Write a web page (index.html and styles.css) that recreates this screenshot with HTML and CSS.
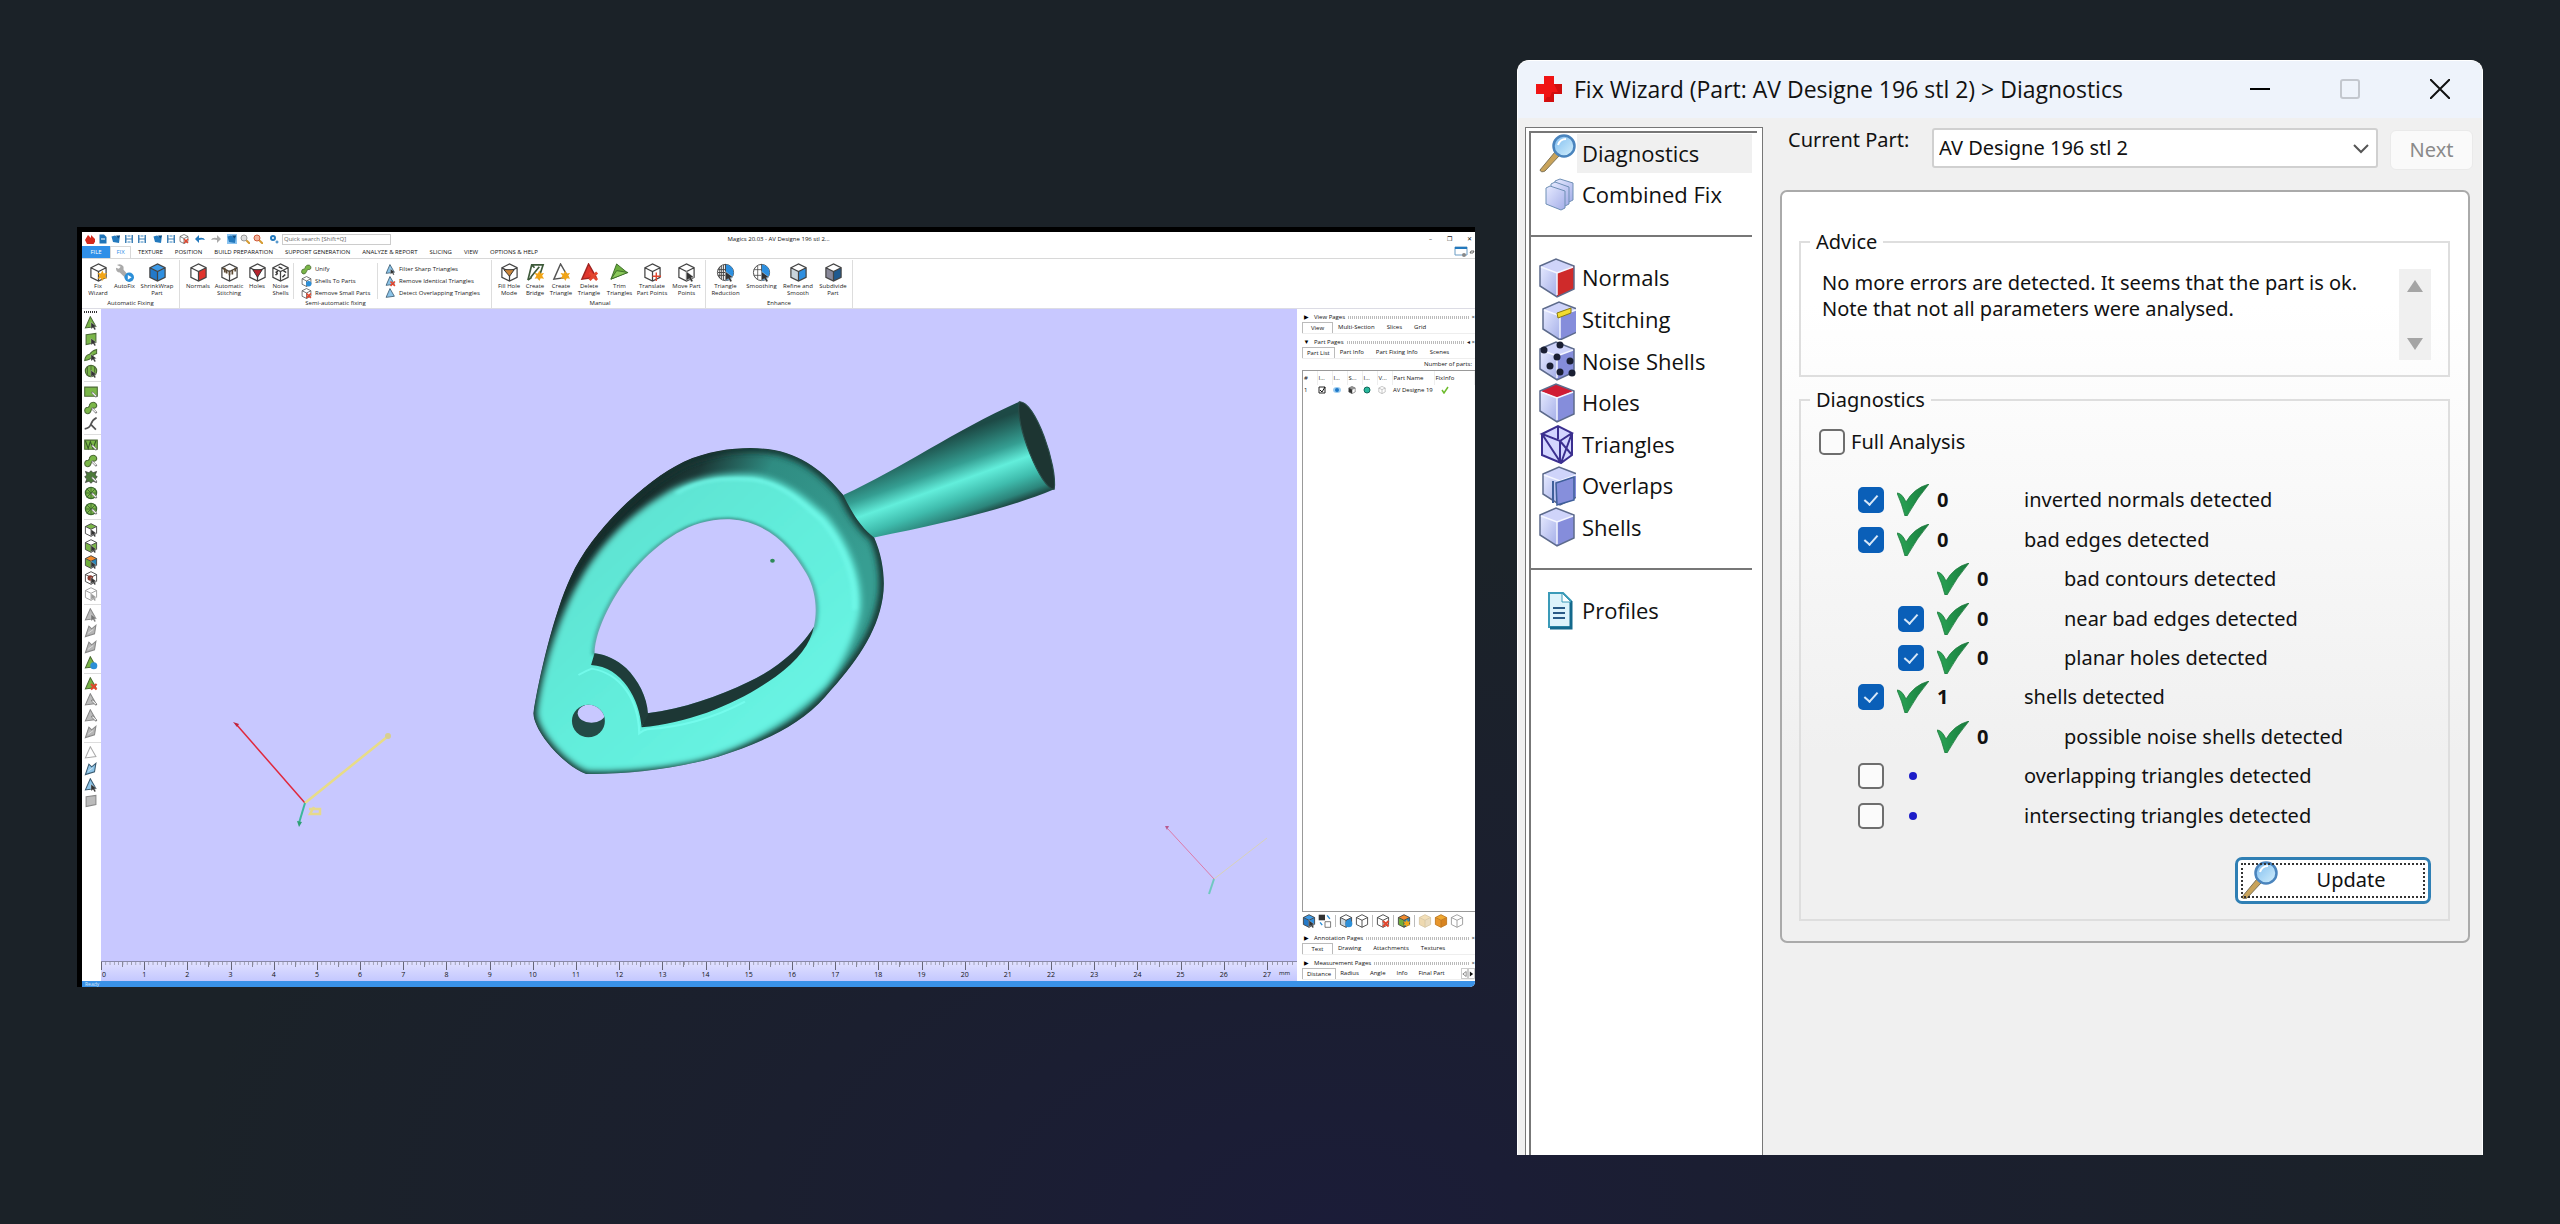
FILE: index.html
```html
<!DOCTYPE html>
<html lang="en">
<head>
<meta charset="utf-8">
<title>Magics - Fix Wizard</title>
<link rel="stylesheet" href="styles.css">
</head>
<body>
<svg class="defs" aria-hidden="true">
  <defs>
    <linearGradient id="lens" x1="0" y1="0" x2="1" y2="1"><stop offset="0" stop-color="#7dbcf0"/><stop offset="1" stop-color="#d5f0fc"/></linearGradient>
    <linearGradient id="lav" x1="0" y1="0" x2="1" y2="1"><stop offset="0" stop-color="#e6eaff"/><stop offset="1" stop-color="#a4aee8"/></linearGradient>
    <linearGradient id="mark" x1="0" y1="0" x2="1" y2="0"><stop offset="0" stop-color="#2ba656"/><stop offset="1" stop-color="#177a3c"/></linearGradient>
  </defs>
  <symbol id="glass" viewBox="0 0 38 38"><path d="M2 36 17 18l4 4L7 37q-4 2-5-1z" fill="#c9a35a" stroke="#7d7256"/><circle cx="26" cy="12" r="10.500" fill="url(#lens)" stroke="#4a84bd" stroke-width="2.500"/><path d="M20 11q2-6 8-6" fill="none" stroke="#fff" stroke-width="2"/></symbol>
  <symbol id="box" viewBox="0 0 38 40"><path d="M2 8 18 1l18 7-17 7z" fill="var(--t,#cfd4fa)"/><path d="M2 8 19 15v24L2 28z" fill="url(#lav)"/><path d="M19 15 36 8v23L19 39z" fill="var(--r,#858ddb)"/><path d="M2 8 18 1l18 7v23L19 39 2 28z" fill="none" stroke="#5d6b8c" stroke-width="1.500"/><path d="M3 9 19 15 35 9M19 15v22" fill="none" stroke="#f4f6ff" stroke-width="1.500"/></symbol>
  <symbol id="tick" viewBox="0 0 32 32"><path d="M0 9q5 0 9 9Q17 4 32 0 20 14 10 32H8Q5 20 0 9z" fill="url(#mark)" stroke="#1d7a3c" stroke-width=".8"/></symbol>
  <symbol id="cube" viewBox="0 0 20 20"><path d="M2 5 10 1l8 4-8 4z" fill="var(--t,#fff)"/><path d="M2 5l8 4v10l-8-4z" fill="var(--l,#fff)"/><path d="M18 5l-8 4v10l8-4z" fill="var(--r,#fff)"/><path d="M2 5 10 1l8 4v10l-8 4-8-4zM2 5l8 4 8-4M10 9v10" fill="none" stroke="var(--s,#444)" stroke-width="1.300"/></symbol>
  <symbol id="cursor" viewBox="0 0 20 20"><path d="M10 9l8 6-3 .500 2 3.500-2 1-2-3.500-3 2z" fill="var(--k,#333)" stroke="#fff" stroke-width=".4"/></symbol>
  <symbol id="tri" viewBox="0 0 20 20"><path d="M2 17 9 1l8 14z" fill="var(--t,#7ab648)" stroke="var(--s,#4c6b35)" stroke-width="1.500"/></symbol>
  <symbol id="quad" viewBox="0 0 20 20"><path d="M3 4 17 2v13L3 18z" fill="var(--t,#7ab648)" stroke="var(--s,#4c6b35)" stroke-width="1.500"/></symbol>
  <symbol id="slant" viewBox="0 0 20 20"><path d="M2 18 7 3l4 4 6-5-2 12z" fill="var(--t,#b5b5b5)" stroke="var(--s,#888)" stroke-width="1.500"/><path d="M6 13l7-5" stroke="#eee"/></symbol>
  <symbol id="curve" viewBox="0 0 20 20"><path d="M1 18q1-8 7-9 3-5 10-7v6q-5 1-7 5-2 4-10 5z" fill="#7ab648" stroke="#4c6b35" stroke-width="1.500"/></symbol>
  <symbol id="line" viewBox="0 0 20 20"><path d="M1 17q7-1 9-7T18 1M10 11l7 7" fill="none" stroke="#555" stroke-width="2.500"/></symbol>
  <symbol id="disc" viewBox="0 0 20 20"><circle cx="10" cy="10" r="8" fill="#7ab648" stroke="#4c6b35" stroke-width="1.800"/><path d="M10 2v16M5 4v12M15 4v12" stroke="#4c6b35" stroke-width="1.300"/></symbol>
  <symbol id="wheel" viewBox="0 0 20 20"><circle cx="10" cy="10" r="8" fill="#7ab648" stroke="#3e6a30" stroke-width="1.800"/><path d="M10 2v16M2 10h16M4 4l12 12M16 4 4 16" stroke="#3e6a30" stroke-width="1.300"/></symbol>
  <symbol id="rect" viewBox="0 0 20 20"><path d="M1 3h18v13H1z" fill="#7ab648" stroke="#4c6b35" stroke-width="1.500"/></symbol>
  <symbol id="rectz" viewBox="0 0 20 20"><path d="M1 3h18v13H1z" fill="#7ab648" stroke="#4c6b35" stroke-width="1.500"/><path d="M2 4l4 11 3-10 4 10 4-11" fill="none" stroke="#355a26" stroke-width="1.500"/></symbol>
  <symbol id="blob" viewBox="0 0 20 20"><path d="M1 14q0-5 5-5 2-1 2-4 2-4 7-3 4 2 3 6-2 3-5 2-3 1-3 4-2 5-6 4-3-1-3-4z" fill="#7ab648" stroke="#4c6b35" stroke-width="1.500"/></symbol>
  <symbol id="burst" viewBox="0 0 20 20"><path d="M2 2l5 2 3-3 3 3 5-2-2 5 3 3-3 3 2 5-5-2-3 3-3-3-5 2 2-5-3-3 3-3z" fill="#4c7a3a" stroke="#333"/></symbol>
  <symbol id="rim" viewBox="0 0 20 20"><path d="M11 10l7 7" stroke="#777" stroke-width="3"/><path d="M12 11l5 5" stroke="#fff" stroke-width="1.500"/></symbol>
  <symbol id="redx" viewBox="0 0 20 20"><path d="M10 10l8 8M18 10l-8 8" stroke="#e2472f" stroke-width="3"/></symbol>
  <symbol id="bluep" viewBox="0 0 20 20"><circle cx="14" cy="14" r="5" fill="#2c8fd8"/></symbol>
  <symbol id="star" viewBox="0 0 20 20"><path d="M14 8l1.500 3 3.500-.5-2 3 2 3-3.500-.5L14 19l-1.500-3-3.500.5 2-3-2-3 3.500.5z" fill="#f2a516"/></symbol>
  <symbol id="disk" viewBox="0 0 20 20"><path d="M2 2h3v16H2zM15 2h3v16h-3zM5 9h10v2H5z" fill="#3d7fb5"/><path d="M7 2h6v4H7zM7 14h6v4H7z" fill="#9cc3e0"/></symbol>
  <symbol id="folder" viewBox="0 0 20 20"><path d="M1 5l7-2 4 2 6-2-2 15-12-2z" fill="#2379bd"/><path d="M10 3l8 0-3 6z" fill="#114a7d"/></symbol>
  <symbol id="page" viewBox="0 0 20 20"><path d="M3 1h9l5 5v13H3z" fill="#1f74b8"/><path d="M6 9h8v2H6z" fill="#fff"/></symbol>
</svg>

<main class="desktop">
  <section class="magics" aria-label="Magics">
    <header class="topbar">
      <div class="quick">
        <svg class="q"><path d="M3 1l3 3 0-3 5 5-3 5-6-1-2-4z" fill="#d4281c"/></svg>
        <svg class="q"><use href="#page"/></svg>
        <svg class="q"><use href="#folder"/></svg>
        <svg class="q"><use href="#disk"/></svg>
        <svg class="q"><use href="#disk"/></svg>
        <i></i>
        <svg class="q"><use href="#folder"/></svg>
        <svg class="q"><use href="#disk"/></svg>
        <svg class="q"><use href="#cube"/><use href="#redx"/></svg>
        <i></i>
        <svg class="q"><path d="M0 5l4-4v3q5-1 6 2-3-1-6 0v3z" fill="#2379bd"/></svg>
        <i></i>
        <svg class="q"><path d="M10 5L6 1v3Q1 3 0 6q3-1 6 0v3z" fill="#aaa"/></svg>
        <i></i>
        <svg class="q on"><use href="#folder"/></svg>
        <svg class="q"><path d="M6 6l4 4" stroke="#d59b32" stroke-width="2"/><circle cx="4" cy="4" r="3" fill="#ddd" stroke="#999"/></svg>
        <svg class="q"><path d="M6 6l4 4" stroke="#d59b32" stroke-width="2"/><circle cx="4" cy="4" r="3" fill="#f3b39c" stroke="#d05a3a"/></svg>
        <i></i>
        <svg class="q"><circle cx="4" cy="4" r="2" fill="none" stroke="#2379bd" stroke-width="2"/><circle cx="8" cy="8" r="1" fill="none" stroke="#2379bd" stroke-width="1"/></svg>
        <input class="search" type="text" placeholder="Quick search [Shift+Q]" aria-label="Quick search">
      </div>
      <h1 class="apptitle">Magics 20.03 - AV Designe 196 stl 2...</h1>
      <div class="winbtns"><button>–</button><button>❐</button><button>✕</button></div>
    </header>
    <nav class="tabs">
      <button class="file">FILE</button><button class="fix">FIX</button><button>TEXTURE</button><button>POSITION</button><button>BUILD PREPARATION</button><button>SUPPORT GENERATION</button><button>ANALYZE &amp; REPORT</button><button>SLICING</button><button>VIEW</button><button>OPTIONS &amp; HELP</button>
      <svg class="wsp" viewBox="0 0 20 12"><path d="M1 1h12v8H1z" fill="#fff" stroke="#6a9cc4"/><path d="M1 1h12v2H1z" fill="#2379bd"/><circle cx="10" cy="9" r="2" fill="#888"/><path d="M16 7h3l1-2h-3z" fill="none" stroke="#444" stroke-width=".8"/></svg>
    </nav>
    <div class="ribbon">
      <section class="group auto">
        <div class="tools">
          <button><svg><use href="#cube"/><use href="#star"/></svg>Fix<br>Wizard</button>
          <button><svg viewBox="0 0 20 20"><path d="M2 2q5-2 7 2v3l7 8-3 3-8-8q-4 0-4-5l3 1 2-2z" fill="#aaa"/><circle cx="15" cy="15" r="5" fill="#2c8fd8"/><path d="M13.500 12.500l4 2.500-4 2.500z" fill="#fff"/></svg>AutoFix</button>
          <button class="cblue"><svg><use href="#cube"/></svg>ShrinkWrap<br>Part</button>
        </div>
        <h2>Automatic Fixing</h2>
      </section>
      <section class="group semi">
        <div class="row">
          <div class="tools">
            <button class="cred"><svg><use href="#cube"/></svg>Normals</button>
            <button><svg viewBox="0 0 20 20"><use href="#cube"/><path d="M3 6h2v4M7 7v4M10 8v5M13 7v5M16 5v4" fill="none" stroke="#5d4a33" stroke-width="1.800"/></svg>Automatic<br>Stitching</button>
            <button><svg viewBox="0 0 20 20"><use href="#cube"/><path d="M5 7h10l-5 8z" fill="#b8242e" stroke="#333"/></svg>Holes</button>
            <button><svg viewBox="0 0 20 20"><use href="#cube"/><path d="M5 9l2 3M7 8l-2 5M13 8l3 2M15 12l-3 3M8 4l4 2" stroke="#333" stroke-width="1.500"/></svg>Noise<br>Shells</button>
          </div>
          <div class="list">
            <button><svg><use href="#blob"/></svg>Unify</button>
            <button><svg><use href="#cube"/><use href="#bluep"/></svg>Shells To Parts</button>
            <button><svg><use href="#cube"/><use href="#redx"/></svg>Remove Small Parts</button>
          </div>
          <div class="list">
            <button class="tblue"><svg><use href="#tri"/><use href="#cursor"/></svg>Filter Sharp Triangles</button>
            <button class="tblue"><svg><use href="#tri"/><use href="#redx"/></svg>Remove Identical Triangles</button>
            <button class="tblue"><svg><use href="#tri"/></svg>Detect Overlapping Triangles</button>
          </div>
        </div>
        <h2>Semi-automatic fixing</h2>
      </section>
      <section class="group manual">
        <div class="tools">
          <button><svg viewBox="0 0 20 20"><use href="#cube"/><path d="M4 7h11l-5 7z" fill="#c98439" stroke="#333"/></svg>Fill Hole<br>Mode</button>
          <button><svg viewBox="0 0 20 20"><path d="M2 18 6 2h12l-5 15M2 18l4-3M6 2l3 3M5 15 14 4" fill="none" stroke="#3e5a3a" stroke-width="1.800"/><use href="#star"/></svg>Create<br>Bridge</button>
          <button class="tnone"><svg><use href="#tri"/><use href="#star"/></svg>Create<br>Triangle</button>
          <button class="tred"><svg><use href="#tri"/><use href="#redx"/></svg>Delete<br>Triangle</button>
          <button><svg viewBox="0 0 20 20"><path d="M1 17 7 1l11 9z" fill="#6cae3e" stroke="#3c6b28"/><path d="M1 17 7 8l12 2z" fill="#8cc95c" stroke="#3c6b28"/></svg>Trim<br>Triangles</button>
          <button><svg viewBox="0 0 20 20"><use href="#cube"/><path d="M14 10v9M10 14h9" stroke="#e2472f" stroke-width="1.500"/></svg>Translate<br>Part Points</button>
          <button><svg><use href="#cube"/><use href="#cursor"/></svg>Move Part<br>Points</button>
        </div>
        <h2>Manual</h2>
      </section>
      <section class="group enhance">
        <div class="tools">
          <button><svg viewBox="0 0 20 20"><circle cx="10" cy="10" r="8.500" fill="#fff" stroke="#444"/><path d="M10 1.500a8.500 8.500 0 0 1 0 17z" fill="#2c8fe0"/><path d="M10 1v18M6 3v14M2 7h8M2 10h8M2 13h8M8 2v16M4 4v12" stroke="#444"/><use href="#cursor"/></svg>Triangle<br>Reduction</button>
          <button><svg viewBox="0 0 20 20"><circle cx="10" cy="10" r="8.500" fill="#fff" stroke="#444"/><path d="M10 1.500a8.500 8.500 0 0 1 0 17z" fill="#2c8fe0"/><path d="M10 1v18M2 7h8M2 13h8M6 3v14" stroke="#444" stroke-width=".8"/><use href="#cursor"/></svg>Smoothing</button>
          <button class="crefine"><svg><use href="#cube"/></svg>Refine and<br>Smooth</button>
          <button class="csub"><svg><use href="#cube"/></svg>Subdivide<br>Part</button>
        </div>
        <h2>Enhance</h2>
      </section>
    </div>
    <div class="work">
      <aside class="marks">
        <span class="grip"></span>
        <div><svg><use href="#tri"/><use href="#cursor"/></svg><svg><use href="#quad"/><use href="#cursor"/></svg><svg><use href="#curve"/><use href="#cursor"/></svg><svg><use href="#disc"/><use href="#cursor"/></svg></div>
        <div><svg><use href="#rect"/><use href="#rim"/></svg><svg><use href="#blob"/><use href="#rim"/></svg><svg><use href="#line"/></svg></div>
        <div><svg><use href="#rectz"/><use href="#rim"/></svg><svg><use href="#blob"/><use href="#rim"/></svg><svg><use href="#burst"/><use href="#rim"/></svg><svg><use href="#wheel"/><use href="#rim"/></svg><svg><use href="#wheel"/><use href="#rim"/></svg></div>
        <div><svg class="cgt"><use href="#cube"/><use href="#cursor"/></svg><svg class="cgs"><use href="#cube"/><use href="#cursor"/></svg><svg class="cmix"><use href="#cube"/><use href="#cursor"/></svg><svg viewBox="0 0 20 20"><use href="#cube"/><circle cx="9" cy="10" r="4" fill="#8a3b30"/><use href="#cursor"/></svg><svg class="cgrey"><use href="#cube"/><use href="#cursor"/></svg></div>
        <div><svg class="tgrey"><use href="#tri"/><use href="#cursor"/></svg><svg><use href="#slant"/></svg><svg><use href="#slant"/></svg><svg><use href="#tri"/><use href="#bluep"/></svg></div>
        <div><svg><use href="#tri"/><use href="#redx"/></svg><svg class="tgrey"><use href="#tri"/><use href="#rim"/></svg><svg class="tgrey"><use href="#tri"/><use href="#rim"/></svg><svg><use href="#slant"/></svg></div>
        <div><svg class="tpale"><use href="#tri"/></svg><svg class="tblue"><use href="#slant"/></svg><svg class="tblue"><use href="#tri"/><use href="#cursor"/></svg><svg class="tgrey"><use href="#quad"/></svg></div>
      </aside>
      <div class="stage">
        <svg class="scene" viewBox="0 0 1196 652">
          <defs>
            <linearGradient id="cone" gradientUnits="userSpaceOnUse" x1="1110" y1="195" x2="1205" y2="425"><stop offset="0" stop-color="#1d4a46"/><stop offset=".12" stop-color="#24665f"/><stop offset=".35" stop-color="#359f93"/><stop offset=".54" stop-color="#62eedb"/><stop offset=".75" stop-color="#3fbcad"/><stop offset=".92" stop-color="#2c857b"/><stop offset="1" stop-color="#1f4d48"/></linearGradient>
            <linearGradient id="side" gradientUnits="userSpaceOnUse" x1="330" y1="280" x2="940" y2="560"><stop offset="0" stop-color="#142423"/><stop offset=".25" stop-color="#1b3836"/><stop offset=".5" stop-color="#2f8c82"/><stop offset="1" stop-color="#379e92"/></linearGradient>
            <linearGradient id="face" x1="0" y1="0" x2="1" y2="1"><stop offset="0" stop-color="#5cdccc"/><stop offset=".5" stop-color="#62eddb"/><stop offset="1" stop-color="#6cf8e8"/></linearGradient>
            <path id="outer" d="M87 1000C100 900 140 700 185 590 240 450 380 300 480 245 560 205 640 200 700 207 790 220 850 280 897 345 920 400 945 445 978 473 1000 530 1008 600 1000 655 985 760 930 850 850 950 780 1040 680 1090 570 1130 450 1170 320 1184 225 1182 170 1160 90 1060 87 1000Z"/>
            <path id="hole" d="M247 820C250 740 300 640 350 570 420 480 500 415 600 418 700 425 760 500 800 580 825 630 830 690 820 740 790 800 720 870 650 905 570 950 480 985 385 1000 385 950 360 900 330 865 305 840 280 825 247 820Z"/>
            <clipPath id="inRing"><use href="#outer"/></clipPath>
            <clipPath id="bore"><ellipse cx="231" cy="1023" rx="43" ry="49"/></clipPath>
            <filter id="soft" x="-10%" y="-10%" width="120%" height="120%"><feGaussianBlur stdDeviation="9"/></filter>
            <filter id="soft2" x="-10%" y="-10%" width="120%" height="120%"><feGaussianBlur stdDeviation="5"/></filter>
          </defs>
          <g transform="translate(399 71) scale(.3827 .3333)">
            <path d="M897 345C1050 265 1190 150 1357 65L1448 328C1330 385 1180 425 975 473 930 460 900 400 897 345Z" fill="url(#cone)"/>
            <path d="M1357 65C1398 60 1458 260 1448 328 1415 330 1343 130 1357 65Z" fill="#1d3532" stroke="#2a4d49" stroke-width="3"/>
            <g clip-path="url(#inRing)">
              <use href="#outer" fill="url(#side)"/>
              <use href="#outer" fill="none" stroke="#16302e" stroke-width="24" filter="url(#soft)"/>
              <path d="M96 1000C108 880 150 715 209 600 270 478 347 396 450 328 530 282 600 280 660 284 742 297 795 348 854 408 914 490 950 600 942 690 932 762 892 862 852 918 762 1018 640 1110 500 1146 400 1168 300 1175 230 1173 178 1154 100 1060 96 1000Z" fill="url(#face)" filter="url(#soft)"/>
              <path d="M460 340C530 292 600 295 660 298 740 310 790 370 840 420 895 490 934 600 926 690" fill="none" stroke="#78fff0" stroke-width="10" filter="url(#soft2)" opacity=".7"/>
            </g>
            <use href="#hole" fill="#c8c8ff" stroke="#2b857c" stroke-width="9" filter="url(#soft2)"/>
            <use href="#hole" fill="#c8c8ff"/>
            <path d="M820 740C790 800 720 870 650 905 570 950 480 985 385 1000L370 1042C500 1030 630 965 720 890 780 840 812 790 820 740Z" fill="#1d3735"/>
            <path d="M247 820C280 825 305 840 330 865 360 900 385 950 387 1005L370 1042C365 960 320 860 238 855Z" fill="#1f3d3a"/>
            <path d="M205 885Q225 872 240 866C310 880 362 950 364 1060Q375 1050 385 1048 520 1038 640 965" fill="none" stroke="#78fff0" stroke-width="6" opacity=".75"/>
            <ellipse cx="231" cy="1023" rx="43" ry="49" fill="#234a46"/>
            <ellipse cx="239" cy="1000" rx="36" ry="28" fill="#c8c8ff" clip-path="url(#bore)"/>
            <circle cx="712" cy="542" r="6" fill="#2e8b57"/>
          </g>
          <path d="M204 494 135 415" stroke="#e0283c" stroke-width="1.500"/><path d="M132 413l4 5 2-3z" fill="#c0243c"/>
          <path d="M204 494 286 428" stroke="#e8dc86" stroke-width="2.500"/><path d="M208 500h11v5h-10l4-7" fill="none" stroke="#e6d98c" stroke-width="2.500"/><circle cx="287" cy="427" r="3" fill="#d8cf90"/>
          <path d="M204 494 198 514" stroke="#3cb89a" stroke-width="2"/><path d="M196 512l5 1-3 5z" fill="#2f9f74"/>
          <path d="M1113 570 1067 520" stroke="#dd7aa8"/><path d="M1113 570 1166 529" stroke="#d8d2b8"/><path d="M1113 570 1108 585" stroke="#70c8c0" stroke-width="2"/><path d="M1064 517h4l-2 4z" fill="#b85a90"/>
        </svg>
        <div class="ruler">
          <span><b>0</b></span><span><b>1</b></span><span><b>2</b></span><span><b>3</b></span><span><b>4</b></span><span><b>5</b></span><span><b>6</b></span><span><b>7</b></span><span><b>8</b></span><span><b>9</b></span><span><b>10</b></span><span><b>11</b></span><span><b>12</b></span><span><b>13</b></span><span><b>14</b></span><span><b>15</b></span><span><b>16</b></span><span><b>17</b></span><span><b>18</b></span><span><b>19</b></span><span><b>20</b></span><span><b>21</b></span><span><b>22</b></span><span><b>23</b></span><span><b>24</b></span><span><b>25</b></span><span><b>26</b></span><span class="end"><b>27</b><em>mm</em></span>
        </div>
      </div>
      <aside class="pages">
        <h3><i>▶</i>View Pages<span></span>×</h3>
        <div class="ptabs"><button class="on">View</button><button>Multi-Section</button><button>Slices</button><button>Grid</button></div>
        <h3><i>▼</i>Part Pages<span></span>◂ ×</h3>
        <div class="ptabs"><button class="on">Part List</button><button>Part Info</button><button>Part Fixing Info</button><button>Scenes</button></div>
        <p class="count">Number of parts:</p>
        <div class="parts">
          <table>
            <thead><tr><th>#</th><th>I...</th><th>I...</th><th>S...</th><th>I...</th><th>V...</th><th>Part Name</th><th>FixInfo</th></tr></thead>
            <tbody><tr><td>1</td><td><svg viewBox="0 0 8 8"><path d="M1 1h6v6H1z" fill="#fff" stroke="#222"/><path d="M2 4l2 2 3-5" fill="none" stroke="#111"/></svg></td><td><svg viewBox="0 0 8 8"><ellipse cx="4" cy="4" rx="4" ry="3" fill="#9cccf0"/><circle cx="4" cy="4" r="2" fill="#1c78c8"/></svg></td><td class="cdark"><svg><use href="#cube"/></svg></td><td><svg viewBox="0 0 8 8"><circle cx="4" cy="4" r="3" fill="#28b89c" stroke="#126a5c"/></svg></td><td class="cgrey"><svg><use href="#cube"/></svg></td><td>AV Designe 19</td><td><svg class="ok" viewBox="0 0 8 8"><path d="M1 4l2 3 4-6" fill="none" stroke="#6dbb2c" stroke-width="1.500"/></svg></td></tr></tbody>
          </table>
        </div>
        <div class="ptools">
          <svg class="cblue"><use href="#cube"/><use href="#cursor"/></svg><svg viewBox="0 0 20 20"><path d="M1 1h9v8H1z" fill="#333"/><path d="M10 11h8v8h-8z" fill="#fff" stroke="#444"/><path d="M13 2l4 5M3 12l3 4" stroke="#2c8fd8" stroke-width="2"/></svg><i></i><svg class="crefine"><use href="#cube"/><use href="#bluep"/></svg><svg><use href="#cube"/></svg><i></i><svg><use href="#cube"/><use href="#redx"/></svg><i></i><svg class="cmix"><use href="#cube"/><use href="#star"/></svg><i></i><svg class="cpale"><use href="#cube"/></svg><svg class="cgold"><use href="#cube"/></svg><svg class="cgrey"><use href="#cube"/></svg>
        </div>
        <h3><i>▶</i>Annotation Pages<span></span>×</h3>
        <div class="ptabs"><button class="on">Text</button><button>Drawing</button><button>Attachments</button><button>Textures</button></div>
        <h3><i>▶</i>Measurement Pages<span></span>×</h3>
        <div class="ptabs tight"><button class="on">Distance</button><button>Radius</button><button>Angle</button><button>Info</button><button>Final Part</button><div class="scr"><button aria-label="Previous"><svg viewBox="0 0 6 8"><path d="M5 1v6L1 4z" fill="#fff" stroke="#777"/></svg></button><button aria-label="Next tabs"><svg viewBox="0 0 6 8"><path d="M1 1v6l4-3z" fill="#111"/></svg></button></div></div>
      </aside>
    </div>
    <footer class="status">Ready</footer>
  </section>

  <section class="wizard" aria-label="Fix Wizard">
    <header class="wtitle">
      <svg class="cross" viewBox="0 0 28 28"><path d="M9 1h10v8h8v10h-8v8H9v-8H1V9h8z" fill="#f01414"/><path d="M19 9h8v10h-8v8H9l3-5h3l2-5h6z" fill="#b80a0a" opacity=".55"/></svg>
      <h1>Fix Wizard (Part: AV Designe 196 stl 2) &gt; Diagnostics</h1>
      <button aria-label="Minimize"><svg viewBox="0 0 20 20"><path d="M0 10h20" stroke="#000" stroke-width="2"/></svg></button>
      <button aria-label="Maximize" disabled><svg viewBox="0 0 20 20"><rect x="1" y="1" width="18" height="18" rx="2" fill="none" stroke="#c3c7ce" stroke-width="2"/></svg></button>
      <button aria-label="Close"><svg viewBox="0 0 20 20"><path d="M0 0l20 20M20 0 0 20" stroke="#111" stroke-width="2"/></svg></button>
    </header>
    <div class="wbody">
      <nav class="steps">
        <ul>
          <li><a href="#" class="sel"><svg><use href="#glass"/></svg><span>Diagnostics</span></a></li>
          <li><a href="#"><svg viewBox="0 0 38 40"><g stroke="#6f8fb5" fill="url(#lav)"><path d="M17 6l5-2 13 4v17l-4 2-14-4z"/><path d="M13 9l4-2 14 5v17l-4 2-14-5z"/><path d="M8 13l4-2 15 5v17l-4 2-15-6z"/></g></svg><span>Combined Fix</span></a></li>
          <li class="rule"></li>
          <li><a href="#" class="bred"><svg><use href="#box"/></svg><span>Normals</span></a></li>
          <li><a href="#"><svg viewBox="0 0 38 40"><svg x="3" y="1" width="34" height="38"><use href="#box"/></svg><path d="M19 13l14-5v5l-13 5z" fill="#f3dc2e" stroke="#8a7a10"/></svg><span>Stitching</span></a></li>
          <li><a href="#"><svg viewBox="0 0 38 40"><use href="#box"/><g fill="#1a1f33"><circle cx="22" cy="4" r="3.500"/><circle cx="6" cy="9" r="3.500"/><circle cx="19" cy="16" r="3.500"/><circle cx="12" cy="25" r="3.500"/><circle cx="32" cy="20" r="3.500"/><circle cx="22" cy="31" r="3.500"/><circle cx="34" cy="32" r="3.500"/></g></svg><span>Noise Shells</span></a></li>
          <li><a href="#" class="bhole"><svg><use href="#box"/></svg><span>Holes</span></a></li>
          <li><a href="#"><svg viewBox="0 0 38 40"><path d="M4 10 20 2l14 7v22L23 39 4 31z" fill="#d3d5ff" /><path d="M4 10 20 2l14 7-12 8zM4 10v21l19 8L34 31V9M22 17v22M22 17 34 31M4 10l19 29L34 9M20 2v13" fill="none" stroke="#3b2f8f" stroke-width="2"/></svg><span>Triangles</span></a></li>
          <li><a href="#"><svg viewBox="0 0 38 40"><svg x="3" y="0" width="30" height="38"><use href="#box"/></svg><path d="M18 17l18-6v23l-17 5z" fill="#868fdc" stroke="#3f5f9a" stroke-width="1.500"/><path d="M15 15v22" stroke="#3f5f9a" stroke-width="2"/></svg><span>Overlaps</span></a></li>
          <li><a href="#"><svg><use href="#box"/></svg><span>Shells</span></a></li>
          <li class="rule"></li>
          <li><a href="#"><svg viewBox="0 0 38 40"><path d="M11 3h14l8 8v26H11z" fill="#ddf3fb" stroke="#3a9ab8" stroke-width="2"/><path d="M33 11v27H12" fill="none" stroke="#13698c" stroke-width="3"/><path d="M24 3v9h9z" fill="#fff" stroke="#3a9ab8"/><path d="M15 18h12M15 23h12M15 28h12" stroke="#2a5a86" stroke-width="2"/></svg><span>Profiles</span></a></li>
        </ul>
      </nav>
      <div class="content">
        <div class="current">
          <label for="part">Current Part:</label>
          <div class="combo"><select id="part"><option>AV Designe 196 stl 2</option></select><svg viewBox="0 0 16 10"><path d="M1 1l7 7 7-7" fill="none" stroke="#555" stroke-width="2"/></svg></div>
          <button class="next" disabled>Next</button>
        </div>
        <div class="panel">
          <fieldset class="advice">
            <legend>Advice</legend>
            <div class="advrow">
              <p>No more errors are detected. It seems that the part is ok.<br>Note that not all parameters were analysed.</p>
              <div class="bar"><svg viewBox="0 0 16 12"><path d="M8 0l8 12H0z" fill="#a5a5a5"/></svg><svg viewBox="0 0 16 12"><path d="M8 12l8-12H0z" fill="#a5a5a5"/></svg></div>
            </div>
          </fieldset>
          <fieldset class="diag">
            <legend>Diagnostics</legend>
            <label class="full"><input type="checkbox"><span>Full Analysis</span></label>
            <div class="rows">
              <div><input type="checkbox" id="c1" checked><svg><use href="#tick"/></svg><b>0</b><label for="c1">inverted normals detected</label></div>
              <div><input type="checkbox" id="c2" checked><svg><use href="#tick"/></svg><b>0</b><label for="c2">bad edges detected</label></div>
              <div class="in"><i></i><svg><use href="#tick"/></svg><b>0</b><span>bad contours detected</span></div>
              <div class="in"><input type="checkbox" id="c3" checked><svg><use href="#tick"/></svg><b>0</b><label for="c3">near bad edges detected</label></div>
              <div class="in"><input type="checkbox" id="c4" checked><svg><use href="#tick"/></svg><b>0</b><label for="c4">planar holes detected</label></div>
              <div><input type="checkbox" id="c5" checked><svg><use href="#tick"/></svg><b>1</b><label for="c5">shells detected</label></div>
              <div class="in"><i></i><svg><use href="#tick"/></svg><b>0</b><span>possible noise shells detected</span></div>
              <div><input type="checkbox" id="c6"><i class="dot"></i><b></b><label for="c6">overlapping triangles detected</label></div>
              <div><input type="checkbox" id="c7"><i class="dot"></i><b></b><label for="c7">intersecting triangles detected</label></div>
            </div>
            <button class="update"><svg><use href="#glass"/></svg><span>Update</span></button>
          </fieldset>
        </div>
      </div>
    </div>
  </section>
</main>
</body>
</html>
```
FILE: styles.css
```css
* { box-sizing: border-box; }
body {
  margin: 0;
  font-family: "Open Sans", "Noto Sans", sans-serif;
  color: #111;
  background: radial-gradient(ellipse 45% 55% at 52% 100%, #1b1c38 0%, #1b1f2f 50%, #1b2228 100%) #1b2228;
}
h1, h2, h3, p, ul { margin: 0; padding: 0; font-weight: 400; }
button { font: inherit; color: inherit; border: 0; background: none; padding: 0; margin: 0; }
svg { display: block; flex: none; }
.defs { position: absolute; width: 0; height: 0; }

.desktop {
  min-height: 100vh;
  display: grid;
  grid-template-columns: 1398fr 966fr;
  column-gap: 42px;
  align-items: center;
  padding: 0 77px 10px;
}

/* main application window */
.magics {
  background: #fff;
  border: solid #000;
  border-width: 5px 0 0 5px;
  border-bottom-right-radius: 5px;
  overflow: hidden;
  font-size: 6px;
  line-height: 7px;
  color: #111;
  min-width: 0;
}
.topbar { display: grid; grid-template-columns: 1fr auto 1fr; align-items: center; height: 14px; padding: 0 3px; }
.quick { display: flex; align-items: center; gap: 3px; }
.quick i { width: 0; }
.q { width: 10px; height: 10px; }
.q.on { background: #8cc4f0; }
.search { width: 109px; height: 11px; border: 1px solid #ccc; padding: 0 1px; font: inherit; }
.search::placeholder { color: #666; }
.apptitle { font-size: 6px; color: #111; }
.winbtns { display: flex; justify-content: flex-end; gap: 15px; }
.tabs { display: flex; align-items: stretch; height: 13px; gap: 12px; border-bottom: 1px solid #d8d8d8; color: #111; }
.tabs .file { width: 28px; background: #2f8fe8; color: #fff; }
.tabs .fix { width: 21px; margin: 0 -5px 0 -12px; border: 1px solid #d8d8d8; border-bottom: 0; color: #2f8fe8; }
.wsp { width: 22px; height: 12px; margin-left: auto; }

.ribbon { display: flex; height: 50px; border-bottom: 1px solid #dcdce4; color: #222; }
.group { display: flex; flex-direction: column; justify-content: space-between; border-right: 1px solid #ddd; padding: 3px 2px 1px; margin: 1px 0 0; }
.group h2 { font-size: 6px; text-align: center; }
.tools { display: grid; align-items: start; }
.tools button { display: flex; flex-direction: column; align-items: center; white-space: nowrap; text-align: center; }
.tools svg { width: 19px; height: 19px; margin-bottom: 1px; }
.auto .tools { grid-template-columns: 28px 25px 40px; }
.semi .tools { grid-template-columns: 32px 30px 26px 21px; padding-right: 2px; }
.manual { padding-left: 5px; }
.manual .tools { grid-template-columns: 24px 28px 24px 32px 29px 36px 33px; }
.enhance .tools { grid-template-columns: 35px 37px 36px 34px; }
.row { display: flex; }
.list { display: grid; grid-auto-rows: 12px; align-items: center; border-left: 1px solid #ddd; padding: 0 0 0 7px; width: 84px; }
.list + .list { width: 112px; }
.list button { display: flex; align-items: center; gap: 3px; white-space: nowrap; }
.list svg { width: 11px; height: 11px; }

.cblue { --t: #3d9be8; --l: #2379c8; --r: #2f8fe0; }
.cred { --r: #e0342c; }
.crefine { --l: #c8d4dc; --r: #2f8fe0; }
.csub { --l: #889; --r: #1f5a90; }
.cgt { --t: #7ab648; }
.cgs { --l: #7ab648; --r: #7ab648; }
.cmix { --t: #f08a2c; --l: #6fae3c; --r: #2a86b8; }
.cgrey { --s: #999; --k: #999; }
.cdark { --l: #333; --t: #999; }
.cpale { --t: #f3dfb8; --l: #eed9b0; --r: #eadcc0; --s: #d8c8a4; }
.cgold { --t: #f0a830; --l: #e8962c; --r: #d88420; --s: #c07820; }
.tblue { --t: #8cc4e8; --s: #3a5a70; }
.tred { --t: #e0342c; --s: #a02420; }
.tnone { --t: #fff; --s: #555; }
.tgrey { --t: #bbb; --s: #888; --k: #777; }
.tpale { --t: #fff; --s: #aaa; }

.work { display: grid; grid-template-columns: 19px minmax(0, 1fr) 178px; }
.marks { padding-left: 2px; }
.grip { display: block; height: 2px; width: 13px; margin: 2px 0 2px; background: repeating-linear-gradient(90deg, #333 0 1px, #fff 1px 2px); }
.marks div { display: grid; grid-auto-rows: 16px; align-items: center; }
.marks div + div { border-top: 1px solid #ddd; margin-top: 2px; padding-top: 2px; }
.marks svg { width: 14px; height: 14px; }
.stage { background: #c8c8ff; display: flex; flex-direction: column; }
.scene { width: 100%; height: auto; flex: 1 1 auto; }
.ruler { height: 20px; display: grid; grid-template-columns: repeat(27, 1fr) 30px; border-top: 1px solid #8888a8; background: linear-gradient(#e0e0ff, #c4c8ff); font-size: 7px; }
.ruler span { padding-top: 9px; background: linear-gradient(#667, #667) 0 0 / 1px 8px no-repeat, linear-gradient(#889, #889) 50% 0 / 1px 5px no-repeat, linear-gradient(90deg, #99a 1px, transparent 1px) 0 0 / 10% 3px repeat-x; }
.ruler b { display: block; width: 12px; margin-left: -6px; font-weight: 400; text-align: center; }
.ruler span:first-child b { margin-left: -3px; }
.ruler .end { display: flex; gap: 6px; background-size: 1px 8px, 0 0, 5px 3px; }
.ruler em { font-style: normal; font-size: 6px; line-height: 4px; }

.pages { display: flex; flex-direction: column; padding-left: 5px; color: #111; min-width: 0; overflow: hidden; }
.pages h3 { display: flex; align-items: center; gap: 3px; height: 10px; font-size: 6px; white-space: nowrap; margin-top: 3px; }
.pages h3 i { width: 9px; font-style: normal; text-align: center; color: #000; }
.pages h3 span { flex: 1; height: 3px; background: repeating-linear-gradient(90deg, #bbb 0 1px, #fff 1px 2px); }
.ptabs { display: flex; height: 12px; gap: 12px; white-space: nowrap; border-bottom: 1px solid #eee; }
.ptabs .on { border: 1px solid #bbb; border-bottom: 0; padding: 0 4px; margin-right: -7px; min-width: 31px; }
.ptabs.tight { gap: 11px; }
.scr { display: flex; margin-left: auto; }
.scr button { width: 7px; border: 1px solid #ccc; }
.scr svg { width: 5px; height: 8px; }
.count { text-align: right; height: 11px; padding: 2px 3px 0 0; }
.parts { flex: 1; border: 1px solid #999; border-right: 0; }
table { border-collapse: collapse; table-layout: fixed; width: 100%; }
th, td { font-weight: 400; text-align: left; padding: 0 1px; height: 10px; white-space: nowrap; overflow: hidden; }
th { border-right: 1px solid #eee; height: 14px; }
th:nth-child(1) { width: 14px; }
th:nth-child(n+2):nth-child(-n+6) { width: 15px; }
th:nth-child(7) { width: 42px; }
td svg { width: 8px; height: 8px; }
td .ok { margin-left: 6px; }
.ptools { display: flex; align-items: center; gap: 2px; height: 18px; }
.ptools svg { width: 14px; height: 14px; }
.ptools i { width: 1px; height: 12px; margin: 0 1px; background: #bbb; }
.tight { margin-bottom: 1px; }
.status { height: 6px; background: #3a92e8; color: #d4e8fb; font-size: 5px; line-height: 6px; padding-left: 3px; overflow: hidden; }

/* fix wizard dialog */
.wizard { background: #f0f0f0; border: 1px solid #fff; border-bottom: 0; border-radius: 12px 12px 0 0; overflow: hidden; font-family: "Noto Sans", "Open Sans", sans-serif; font-size: 20px; line-height: 26px; color: #111; min-width: 0; }
.wtitle { display: flex; align-items: center; height: 57px; background: #eef3fb; padding: 0 32px 0 17px; gap: 11px; }
.wtitle h1 { font-family: "Open Sans", sans-serif; font-size: 23px; line-height: 28px; margin-right: auto; white-space: nowrap; }
.wtitle button { margin-left: 59px; }
.wtitle button svg { width: 20px; height: 20px; }
.cross { width: 28px; height: 28px; }
.wbody { display: grid; grid-template-columns: 238px minmax(0, 1fr); column-gap: 17px; padding: 9px 9px 0 7px; min-height: 1037px; }
.steps { background: #fff; border: 1px solid #777; border-bottom: 0; padding: 3px 0 0 3px; }
.steps ul { list-style: none; height: 100%; border: solid #777; border-width: 2px 0 0 2px; margin-right: 5px; display: grid; grid-template-rows: repeat(12, 83fr) 1045fr; padding: 0 5px 0 0; }
.steps a { display: flex; align-items: center; height: 100%; gap: 1px; padding-left: 7px; color: inherit; text-decoration: none; font-family: "Open Sans", sans-serif; font-size: 22px; white-space: nowrap; }
.steps a svg { width: 38px; height: 40px; }
.steps a span { flex: 1; padding: 6px 0 7px 5px; }
.steps .sel span { background: #f0f0f0; }
.rule { align-self: center; height: 2px; background: #777; }
.bred { --r: #cf2a2a; }
.bhole { --t: #d01c34; }

.current { display: flex; align-items: flex-start; height: 63px; padding-left: 8px; }
.current label { width: 144px; }
.combo { position: relative; flex: 1; }
.combo select { appearance: none; display: block; width: 100%; height: 40px; border: 2px solid #d0d0d0; border-radius: 3px; background: #fff; font: inherit; color: inherit; padding: 0 5px; margin-top: 1px; }
.combo svg { position: absolute; right: 9px; top: 17px; width: 16px; height: 10px; }
.next { width: 83px; height: 40px; margin: 3px 0 0 12px; background: #fafafa; border: 1px solid #eaeaea; border-radius: 6px; color: #8a8a8a; }
.panel { border: 2px solid #aaa; border-radius: 7px; background: linear-gradient(#fff 0%, #fff 15%, #f0f0f0 75%); padding: 36px 18px 20px 17px; margin-right: 3px; }
fieldset { border: 2px solid #dedede; margin: 0; padding: 0 17px 15px 18px; min-width: 0; }
fieldset + fieldset { margin-top: 9px; }
legend { line-height: 28px; padding: 0 6px; margin-left: -9px; }
.advrow { display: flex; justify-content: space-between; padding-top: 13px; }
.advrow p { padding: 1px 0 0 3px; white-space: nowrap; }
.bar { width: 32px; height: 91px; background: #f0f0f0; display: flex; flex-direction: column; justify-content: space-between; align-items: center; padding: 11px 0 10px; }
.bar svg { width: 16px; height: 12px; }
.full { display: flex; align-items: center; gap: 6px; margin-top: 15px; }
input[type="checkbox"] { appearance: none; flex: none; width: 26px; height: 26px; margin: 0; border: 2px solid #6e6e6e; border-radius: 5px; background: #fbfbfb; display: grid; place-items: center; }
input[type="checkbox"]:checked { background: #0a5fb8; border-color: #0a5fb8; }
input[type="checkbox"]:checked::after { content: ""; width: 6px; height: 11px; border: solid #d8e8f8; border-width: 0 2px 2px 0; transform: rotate(42deg); margin-bottom: 3px; }
.rows { display: grid; grid-auto-rows: 1fr; height: 355px; margin-top: 26px; padding-left: 39px; }
.rows div { display: grid; grid-template-columns: 39px 40px 87px auto; align-items: center; justify-content: start; }
.rows .in { padding-left: 40px; }
.rows svg { width: 32px; height: 32px; }
.dot { width: 8px; height: 8px; border-radius: 50%; background: #1c1cc8; margin-left: 12px; }
.update { display: flex; align-items: center; width: 196px; height: 47px; margin: 21px 0 0 auto; border: 3px solid #2f7fb4; border-radius: 7px; background: #fff; padding: 2px 4px 2px 2px; }
.update svg { width: 38px; height: 38px; }
.update span { flex: 1; text-align: center; }
.update:not(:active) { outline: 2px dotted #333; outline-offset: -8px; }
```
